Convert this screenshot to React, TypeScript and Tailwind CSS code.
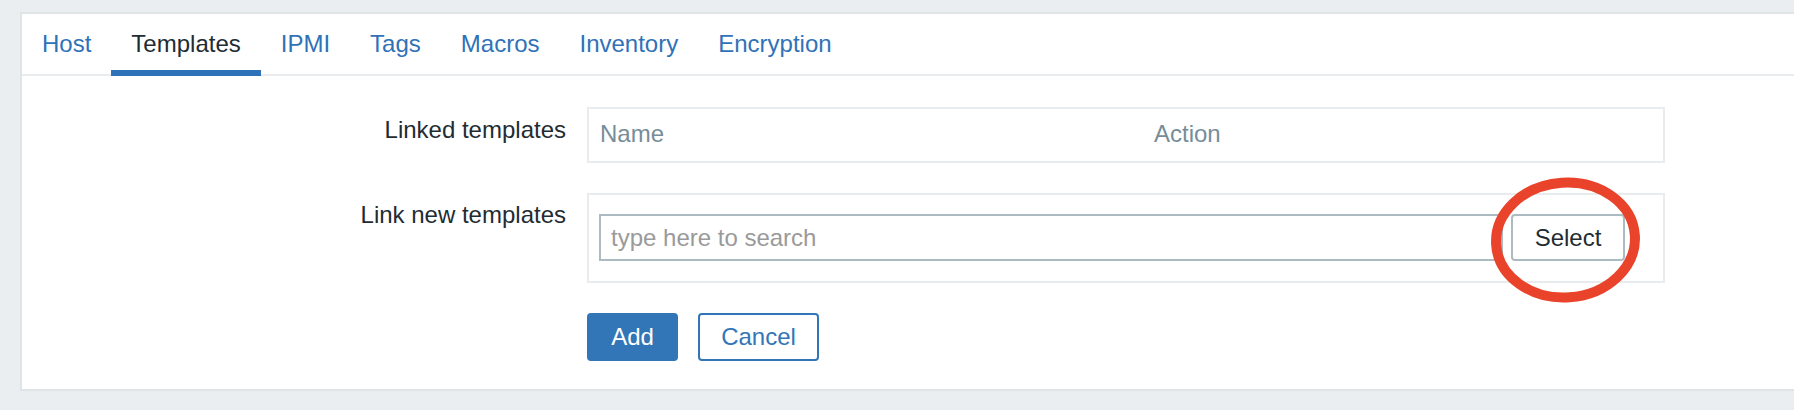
import React from 'react';

const tabs = ['Host', 'Templates', 'IPMI', 'Tags', 'Macros', 'Inventory', 'Encryption'];

export default function App() {
  const active = 'Templates';

  return (
    <div className="w-full h-[410px] bg-[#ebeef1] pt-[12px] overflow-hidden font-['Liberation_Sans',Arial,sans-serif] text-[24px] leading-[28px] text-[#1f2c33]">
      <div className="ml-[20px] bg-white border-l-2 border-t-2 border-b-2 border-[#dfe4e7] pb-[28px]">
        {/* tabs */}
        <div className="flex border-b-2 border-[#e9ecef]">
          {tabs.map((tab) => (
            <div
              key={tab}
              className={
                tab === active
                  ? 'px-5 pt-4 pb-[12px] -mb-[2px] border-b-[6px] border-[#3072b8] text-[#1f2c33]'
                  : 'px-5 pt-4 pb-[12px] -mb-[2px] border-b-[6px] border-transparent text-[#3072b8]'
              }
            >
              {tab}
            </div>
          ))}
        </div>

        {/* form */}
        <div className="grid grid-cols-[544px_1078px] gap-x-[21px] gap-y-[30px] pt-[31px]">
          <div className="text-right pt-[9px]">Linked templates</div>
          <div className="h-[56px] border-2 border-[#e9ecef] flex pl-[11px] pt-[11px] text-[#768d99]">
            <div className="w-[554px]">Name</div>
            <div>Action</div>
          </div>

          <div className="text-right pt-[8px]">Link new templates</div>
          <div className="relative h-[90px] border-2 border-[#e9ecef] flex items-start pt-[19px] pl-[10px]">
            <input
              type="text"
              placeholder="type here to search"
              className="w-[904px] h-[47px] border-2 border-[#acbbc2] pl-[10px] outline-none placeholder:text-[#9a9a9a] text-[24px]"
            />
            <button className="ml-[8px] w-[114px] h-[47px] border-2 border-[#acbbc2] rounded-[4px] bg-white text-[#1f2c33]">
              Select
            </button>
            <svg
              className="absolute left-[901px] top-[-18px] pointer-events-none"
              width="151"
              height="126"
              viewBox="0 0 151 126"
            >
              <ellipse
                cx="75.5"
                cy="63"
                rx="69.5"
                ry="57.5"
                fill="none"
                stroke="#e9432b"
                strokeWidth="10"
                transform="rotate(-4 75.5 63)"
              />
            </svg>
          </div>

          <div />
          <div className="flex">
            <button className="h-[48px] w-[91px] bg-[#3276b8] rounded-[4px] text-white">Add</button>
            <button className="ml-[20px] h-[48px] w-[121px] border-2 border-[#3276b8] rounded-[4px] bg-white text-[#3276b8]">
              Cancel
            </button>
          </div>
        </div>
      </div>
    </div>
  );
}
